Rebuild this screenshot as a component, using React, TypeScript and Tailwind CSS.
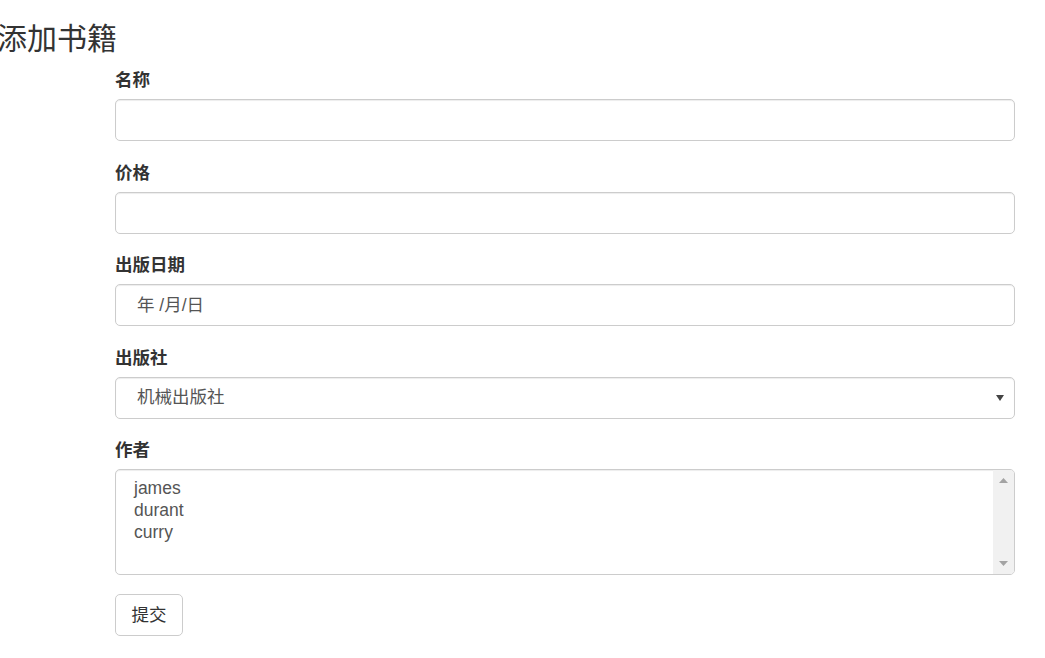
import React from "react";

const font = { fontFamily: '"Liberation Sans", Arial, "Noto Sans CJK SC", sans-serif' };

function Label({ children }: { children: React.ReactNode }) {
  return (
    <div className="mb-[6px] h-[25px] text-[17.5px] font-bold leading-[25px] text-[#333]">
      {children}
    </div>
  );
}

const boxCls =
  "h-[42px] w-full rounded-[5px] border border-[#ccc] bg-white shadow-[inset_0_1px_1px_rgba(0,0,0,0.075)] text-[17.5px] leading-[25px] text-[#555]";

export default function App() {
  return (
    <div className="min-h-[658px] w-[1045px] bg-white text-[#333]" style={font}>
      <div className="ml-[-3px] pt-[22px] text-[30px] leading-[33px] font-normal text-[#333]">
        添加书籍
      </div>
      <div className="ml-[115px] mt-[13px] w-[900px]">
        <div className="mb-[19.5px]">
          <Label>名称</Label>
          <div className={boxCls} />
        </div>
        <div className="mb-[19.5px]">
          <Label>价格</Label>
          <div className={boxCls} />
        </div>
        <div className="mb-[19.5px]">
          <Label>出版日期</Label>
          <div className={boxCls + " flex items-center pl-[21px]"}>年 /月/日</div>
        </div>
        <div className="mb-[19.5px]">
          <Label>出版社</Label>
          <div className={boxCls + " flex items-center justify-between pl-[21px] pr-[10px]"}>
            <span>机械出版社</span>
            <svg width="8" height="6" viewBox="0 0 8 6">
              <path d="M0 0 L8 0 L4 6 Z" fill="#444" />
            </svg>
          </div>
        </div>
        <div className="mb-[19.5px]">
          <Label>作者</Label>
          <div className="relative h-[105.5px] w-full overflow-hidden rounded-[5px] border border-[#ccc] bg-white shadow-[inset_0_1px_1px_rgba(0,0,0,0.075)]">
            <div className="pl-[18px] pt-[7px] text-[17.5px] leading-[22px] text-[#555]">
              <div>james</div>
              <div>durant</div>
              <div>curry</div>
            </div>
            <div className="absolute right-0 top-0 flex h-full w-[21px] flex-col items-center justify-between bg-[#f1f1f1] py-[8px]">
              <svg width="9" height="5" viewBox="0 0 9 5">
                <path d="M0 5 L9 5 L4.5 0 Z" fill="#a3a3a3" />
              </svg>
              <svg width="9" height="5" viewBox="0 0 9 5">
                <path d="M0 0 L9 0 L4.5 5 Z" fill="#a3a3a3" />
              </svg>
            </div>
          </div>
        </div>
        <div className="flex h-[42px] w-[68px] items-center justify-center rounded-[5px] border border-[#ccc] bg-white text-[17.5px] text-[#333]">
          提交
        </div>
      </div>
    </div>
  );
}
